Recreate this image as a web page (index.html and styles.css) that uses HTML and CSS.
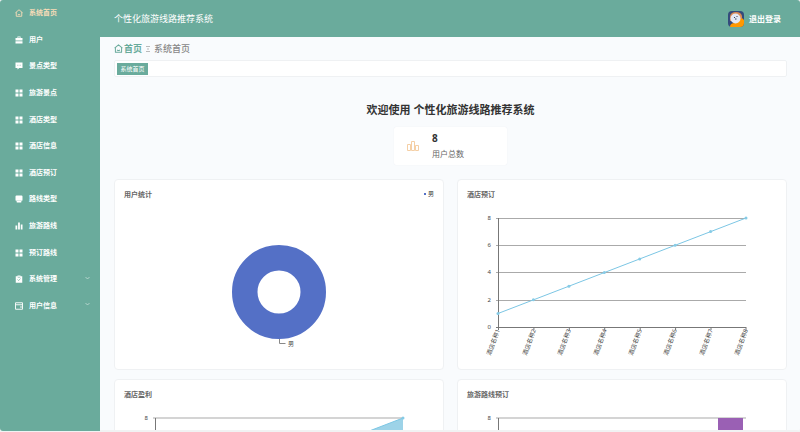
FILE: index.html
```html
<!DOCTYPE html>
<html lang="zh-CN">
<head>
<meta charset="utf-8">
<title>个性化旅游线路推荐系统</title>
<link rel="stylesheet" href="styles.css">
</head>
<body>
<svg class="defs" aria-hidden="true">
  <symbol id="home" viewBox="0 0 16 16"><path d="M1 7.500 8 1.500l7 6M2.500 6.200V14.500h11V6.200M5.500 10.500q2.500 2.500 5 0" fill="none" stroke="currentColor" stroke-width="1.800" stroke-linejoin="round"/></symbol>
  <symbol id="case" viewBox="0 0 16 16"><path d="M5 1h6v3h4v5H1V4h4zM6.500 2.500V4h3V2.500zM1 10.500h14V15H1z" fill="currentColor" fill-rule="evenodd"/></symbol>
  <symbol id="chat" viewBox="0 0 16 16"><path d="M1 1h14v11H8.500L5 15v-3H1z" fill="currentColor"/><path d="M4 6.500h1.500M7.300 6.500h1.500M10.500 6.500H12" stroke="#6aab9c" stroke-width="1.200"/></symbol>
  <symbol id="grid" viewBox="0 0 16 16"><path d="M1 1h6v6H1zM9 1h6v6H9zM1 9h6v6H1zM9 9h6v6H9z" fill="currentColor"/></symbol>
  <symbol id="screen" viewBox="0 0 16 16"><path d="M3 1h10q2 0 2 2v7.500H1V3q0-2 2-2zM1 11h14q-.5 1.500-2.500 1.500V15h-9v-2.500Q1.500 12.500 1 11z" fill="currentColor"/></symbol>
  <symbol id="bars" viewBox="0 0 16 16"><path d="M1 7h3.500v8H1zM6.200 1h3.500v14H6.200zM11.500 5H15v10h-3.500z" fill="currentColor"/></symbol>
  <symbol id="board" viewBox="0 0 16 16"><path d="M1.500 2.500H5V1h6v1.500h3.500V15.500h-13z" fill="currentColor"/><path d="m5 9 2.200 2.200L11 7M5.500 4.500h5" fill="none" stroke="#6aab9c" stroke-width="1.300"/></symbol>
  <symbol id="card" viewBox="0 0 16 16"><path d="M1 1.500h14v13H1zM1 5.500h14M10 10h5" fill="none" stroke="currentColor" stroke-width="1.800"/></symbol>
  <symbol id="down" viewBox="0 0 10 6"><path d="m1 1 4 4 4-4" fill="none" stroke="currentColor" stroke-width="1.200"/></symbol>
</svg>
<div class="shell">
  <nav class="sidebar" aria-label="主菜单">
    <a class="item active" href="#"><svg class="icon"><use href="#home"/></svg>系统首页</a>
    <a class="item" href="#"><svg class="icon"><use href="#case"/></svg>用户</a>
    <a class="item" href="#"><svg class="icon"><use href="#chat"/></svg>景点类型</a>
    <a class="item" href="#"><svg class="icon"><use href="#grid"/></svg>旅游景点</a>
    <a class="item" href="#"><svg class="icon"><use href="#grid"/></svg>酒店类型</a>
    <a class="item" href="#"><svg class="icon"><use href="#grid"/></svg>酒店信息</a>
    <a class="item" href="#"><svg class="icon"><use href="#grid"/></svg>酒店预订</a>
    <a class="item" href="#"><svg class="icon"><use href="#screen"/></svg>路线类型</a>
    <a class="item" href="#"><svg class="icon"><use href="#bars"/></svg>旅游路线</a>
    <a class="item" href="#"><svg class="icon"><use href="#grid"/></svg>预订路线</a>
    <a class="item" href="#"><svg class="icon"><use href="#board"/></svg>系统管理<svg class="arrow"><use href="#down"/></svg></a>
    <a class="item" href="#"><svg class="icon"><use href="#card"/></svg>用户信息<svg class="arrow"><use href="#down"/></svg></a>
  </nav>
  <div class="page">
    <header class="header">
      <span class="brand">个性化旅游线路推荐系统</span>
      <svg class="avatar" viewBox="0 0 16 16" aria-hidden="true">
        <rect width="16" height="16" rx="4" fill="#344b7c"/>
        <path d="M2 5Q3 1 8 1t6 4v5H2z" fill="#d98a55"/>
        <path d="M2 16q0-4 5-4l7-5 2 2v3q0 4-4 4z" fill="#ff9800"/>
        <circle cx="7.500" cy="7.500" r="5" fill="#e3e9f5"/>
        <path d="M6 6.500h1M8.500 5.500h1M7 8h1.500" stroke="#34405c"/>
      </svg>
      <button class="logout" type="button">退出登录</button>
    </header>
    <main class="main">
      <div class="crumbs">
        <a class="crumb-home" href="#"><svg class="icon"><use href="#home"/></svg>首页</a>
        <svg class="sep" viewBox="0 0 4 6" aria-hidden="true"><path d="M0 .5h4M1 3h2M0 5.500h4" stroke="#aaa" stroke-width=".8"/></svg>
        <span>系统首页</span>
      </div>
      <div class="tabs"><button class="tab" type="button">系统首页</button></div>
      <h1 class="welcome">欢迎使用 个性化旅游线路推荐系统</h1>
      <section class="stat">
        <svg class="stat-icon" viewBox="0 0 12 12" aria-hidden="true"><path d="M.5 4.500h3v6h-3zM4.500 1.500h3v9h-3zM8.500 5.500h3v5h-3z" fill="none" stroke="#f5cfa5"/></svg>
        <div><strong class="stat-value">8</strong><span class="stat-label">用户总数</span></div>
      </section>
      <div class="cards">
        <section class="card">
          <h2 class="card-title">用户统计</h2>
          <span class="legend">男</span>
          <svg class="chart" viewBox="0 0 328 164">
            <circle cx="164" cy="87" r="34.250" fill="none" stroke="#5470c6" stroke-width="25.500"/>
            <path d="M164.500 134v4.500h6" fill="none" stroke="#888"/>
            <text class="label" x="173" y="141">男</text>
          </svg>
        </section>
        <section class="card">
          <h2 class="card-title">酒店预订</h2>
          <svg class="chart" viewBox="0 0 328 164">
            <path class="gridline" d="M38 13.500h250M38 40.500h250M38 67.500h250M38 95.500h250"/>
            <path class="axis" d="M40.500 13v112M38 122.500h250M75.900 122v3M111.300 122v3M146.700 122v3M182.200 122v3M217.600 122v3M253 122v3M288 122v3"/>
            <g class="label end"><text x="33" y="15">8</text><text x="33" y="42">6</text><text x="33" y="69">4</text><text x="33" y="97">2</text><text x="33" y="124">0</text></g>
            <path class="line" d="M40 108.500 288 13"/>
            <g class="dots"><circle cx="40" cy="108.500" r="1.500"/><circle cx="75.400" cy="94.800" r="1.500"/><circle cx="110.900" cy="81.200" r="1.500"/><circle cx="146.300" cy="67.500" r="1.500"/><circle cx="181.700" cy="53.900" r="1.500"/><circle cx="217.100" cy="40.300" r="1.500"/><circle cx="252.600" cy="26.600" r="1.500"/><circle cx="288" cy="13" r="1.500"/></g>
            <g class="label end">
              <text transform="translate(42 125) rotate(-70)">酒店名称1</text>
              <text transform="translate(78 125) rotate(-70)">酒店名称2</text>
              <text transform="translate(113 125) rotate(-70)">酒店名称3</text>
              <text transform="translate(149 125) rotate(-70)">酒店名称4</text>
              <text transform="translate(184 125) rotate(-70)">酒店名称5</text>
              <text transform="translate(219 125) rotate(-70)">酒店名称6</text>
              <text transform="translate(255 125) rotate(-70)">酒店名称7</text>
              <text transform="translate(290 125) rotate(-70)">酒店名称8</text>
            </g>
          </svg>
        </section>
        <section class="card">
          <h2 class="card-title">酒店盈利</h2>
          <svg class="chart" viewBox="0 0 328 164">
            <path class="gridline soft" d="M38 13h250"/>
            <path class="axis" d="M40.500 13v110"/>
            <text class="label end" x="33" y="15">8</text>
            <path d="M40 108.500 288 13v109H40z" fill="#9dd3e8"/>
            <path class="line" d="M40 108.500 288 13"/>
            <g class="dots"><circle cx="252.600" cy="26.600" r="1.500"/><circle cx="288" cy="13" r="1.500"/></g>
          </svg>
        </section>
        <section class="card">
          <h2 class="card-title">旅游路线预订</h2>
          <svg class="chart" viewBox="0 0 328 164">
            <path class="gridline soft" d="M38 13h250"/>
            <path class="axis" d="M40.500 13v110"/>
            <text class="label end" x="33" y="15">8</text>
            <path d="M260 13h25v109h-25z" fill="#9a60b4"/>
          </svg>
        </section>
      </div>
    </main>
  </div>
</div>
</body>
</html>
```
FILE: styles.css
```css
* { box-sizing: border-box; }
body {
  margin: 0;
  height: 100vh;
  padding-bottom: 1px;
  overflow: hidden;
  background: #f1f2f3;
  font-family: "Noto Sans", "Noto Sans CJK SC", sans-serif;
  color: #333;
}
a { color: inherit; text-decoration: none; }
button { border: 0; padding: 0; background: none; font: inherit; color: inherit; cursor: pointer; }
h1, h2 { margin: 0; }
.defs { display: none; }
.shell {
  display: grid;
  grid-template-columns: 100px minmax(0, 1fr);
  height: 100%;
  overflow: hidden;
  border-radius: 3px;
}
.sidebar {
  display: grid;
  grid-template-rows: repeat(12, 1fr);
  height: 100%;
  padding-bottom: 112px;
  background: #6aab9c;
  color: #fff;
}
.item {
  display: flex;
  align-items: center;
  gap: 6px;
  padding: 0 10px 0 15px;
  font-size: 7px;
  font-weight: 700;
  line-height: 12px;
}
.active { color: #f8dcb8; }
.icon { width: 8px; height: 8px; flex: none; }
.arrow { width: 5px; height: 4px; margin: 0 0 3px auto; opacity: .8; }
.page { display: flex; flex-direction: column; min-width: 0; min-height: 0; }
.header {
  display: flex;
  align-items: center;
  height: 37px;
  flex: none;
  padding: 0 19px 0 14px;
  background: #6aab9c;
  color: #fff;
}
.brand { margin-right: auto; font-size: 9px; }
.avatar { width: 16px; height: 16px; margin-right: 5px; }
.logout { font-size: 8px; font-weight: 700; }
.main {
  flex: 1;
  min-height: 0;
  overflow: hidden;
  padding: 0 13px 0 14px;
  border-bottom: 1px solid #f1f2f3;
  background: #f9fbfd;
}
.crumbs { display: flex; align-items: center; gap: 4px; height: 23px; font-size: 9px; font-weight: 500; color: #888; }
.crumb-home { display: flex; align-items: center; gap: 1px; font-weight: 700; color: #6aab9c; }
.crumb-home .icon { width: 9px; height: 9px; }
.sep { width: 4px; height: 6px; }
.tabs { display: flex; align-items: center; height: 17px; padding: 0 2px; border: 1px solid #eff1f3; border-radius: 2px; background: #fff; }
.tab { width: 31px; height: 12px; background: #6aab9c; color: #fff; font-size: 6px; line-height: 12px; }
.welcome { margin: 25px 0 10px; font-size: 11px; font-weight: 700; line-height: 15px; text-align: center; }
.stat {
  display: flex;
  align-items: center;
  gap: 13px;
  width: 113px;
  height: 38px;
  margin: 0 auto 14px;
  padding-left: 13px;
  border-radius: 2px;
  background: #fff;
  box-shadow: 0 0 1px #e4e7ea;
}
.stat-icon { width: 12px; height: 12px; }
.stat-value, .stat-label { display: block; line-height: 16px; }
.stat-value { font-size: 10px; }
.stat-label { font-size: 8px; color: #666; }
.cards { display: grid; grid-template-columns: repeat(2, minmax(0, 1fr)); gap: 9px 13px; }
.card { position: relative; border: 1px solid #eff1f3; border-radius: 4px; background: #fff; }
.card-title { padding: 9px 9px 4px; font-size: 7px; font-weight: 700; line-height: 12px; color: #666; }
.legend {
  position: absolute;
  top: 8px;
  right: 9px;
  display: flex;
  align-items: center;
  gap: 2px;
  font-size: 6px;
  line-height: 12px;
}
.legend::before { content: ""; width: 2px; height: 2px; background: #5470c6; }
.chart { display: block; width: 100%; height: auto; }
.label { font-size: 6px; fill: #444; }
.end { text-anchor: end; }
.gridline { fill: none; stroke: #aaa; }
.soft { stroke: #d4d4d4; stroke-width: 2px; }
.axis { fill: none; stroke: #777; }
.line { fill: none; stroke: #7cc6e4; stroke-width: 1px; }
.dots { fill: #86cbe6; }
```
